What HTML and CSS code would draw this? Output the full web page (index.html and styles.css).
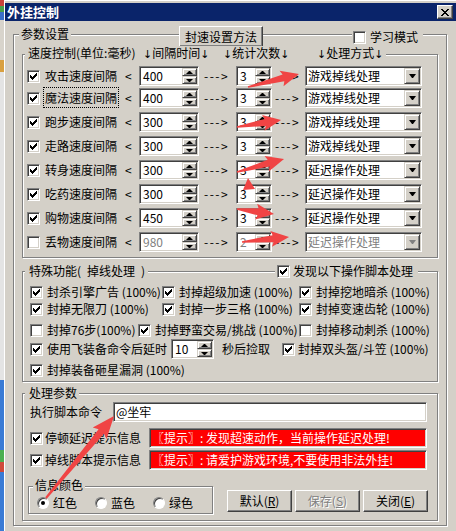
FILE: index.html
```html
<!DOCTYPE html>
<html lang="zh-CN">
<head>
<meta charset="utf-8">
<title>外挂控制</title>
<link rel="stylesheet" href="styles.css">
</head>
<body>
<div class="desk"></div>
<div class="win">
  <div class="titlebar">
    <span class="title">外挂控制</span>
    <span class="close"><svg width="8" height="7" viewBox="0 0 8 7" shape-rendering="crispEdges"><path d="M0 0h2v1H0zM6 0h2v1H6zM1 1h2v1H1zM5 1h2v1H5zM2 2h4v1H2zM3 3h2v1H3zM2 4h4v1H2zM1 5h2v1H1zM5 5h2v1H5zM0 6h2v1H0zM6 6h2v1H6z"/></svg></span>
  </div>

  <div class="group outer">
    <div class="ghead outerhead">
      <span class="cap">参数设置</span>
      <button class="btn method">封速设置方法</button>
      <label class="hcheck learn"><span class="cb"></span><span>学习模式</span></label>
    </div>

    <div class="group inner speed">
      <div class="ghead">
        <span class="cap speedcap"><span class="h1">速度控制(单位:毫秒)</span><span class="h2"><i>↓</i>间隔时间<i>↓</i></span><span class="h3"><i>↓</i>统计次数<i>↓</i></span><span class="h4"><i>↓</i>处理方式<i>↓</i></span></span>
      </div>

      <div class="srow first">
        <span class="cb"><svg viewBox="0 0 11 11" width="11" height="11" shape-rendering="crispEdges"><path d="M8 2h1v1H8zM7 3h2v1H7zM2 4h1v1H2zM6 4h3v1H6zM2 5h2v1H2zM5 5h3v1H5zM2 6h5v1H2zM3 7h3v1H3zM4 8h1v1H4z"/></svg></span>
        <span class="slabel">攻击速度间隔</span><span class="lt">&lt;</span>
        <span class="spin w60"><span class="val">400</span><span class="ud"><span class="up"></span><span class="dn"></span></span></span>
        <span class="dash">---&gt;</span>
        <span class="spin w36"><span class="val">3</span><span class="ud"><span class="up"></span><span class="dn"></span></span></span>
        <span class="dash2">---&gt;</span>
        <span class="combo"><span class="val">游戏掉线处理</span><span class="drop"></span></span>
      </div>
      <div class="srow">
        <span class="cb"><svg viewBox="0 0 11 11" width="11" height="11" shape-rendering="crispEdges"><path d="M8 2h1v1H8zM7 3h2v1H7zM2 4h1v1H2zM6 4h3v1H6zM2 5h2v1H2zM5 5h3v1H5zM2 6h5v1H2zM3 7h3v1H3zM4 8h1v1H4z"/></svg></span>
        <span class="slabel"><span class="focus">魔法速度间隔</span></span><span class="lt">&lt;</span>
        <span class="spin w60"><span class="val">400</span><span class="ud"><span class="up"></span><span class="dn"></span></span></span>
        <span class="dash">---&gt;</span>
        <span class="spin w36"><span class="val">3</span><span class="ud"><span class="up"></span><span class="dn"></span></span></span>
        <span class="dash2">---&gt;</span>
        <span class="combo"><span class="val">游戏掉线处理</span><span class="drop"></span></span>
      </div>
      <div class="srow">
        <span class="cb"><svg viewBox="0 0 11 11" width="11" height="11" shape-rendering="crispEdges"><path d="M8 2h1v1H8zM7 3h2v1H7zM2 4h1v1H2zM6 4h3v1H6zM2 5h2v1H2zM5 5h3v1H5zM2 6h5v1H2zM3 7h3v1H3zM4 8h1v1H4z"/></svg></span>
        <span class="slabel">跑步速度间隔</span><span class="lt">&lt;</span>
        <span class="spin w60"><span class="val">300</span><span class="ud"><span class="up"></span><span class="dn"></span></span></span>
        <span class="dash">---&gt;</span>
        <span class="spin w36"><span class="val">3</span><span class="ud"><span class="up"></span><span class="dn"></span></span></span>
        <span class="dash2">---&gt;</span>
        <span class="combo"><span class="val">游戏掉线处理</span><span class="drop"></span></span>
      </div>
      <div class="srow">
        <span class="cb"><svg viewBox="0 0 11 11" width="11" height="11" shape-rendering="crispEdges"><path d="M8 2h1v1H8zM7 3h2v1H7zM2 4h1v1H2zM6 4h3v1H6zM2 5h2v1H2zM5 5h3v1H5zM2 6h5v1H2zM3 7h3v1H3zM4 8h1v1H4z"/></svg></span>
        <span class="slabel">走路速度间隔</span><span class="lt">&lt;</span>
        <span class="spin w60"><span class="val">300</span><span class="ud"><span class="up"></span><span class="dn"></span></span></span>
        <span class="dash">---&gt;</span>
        <span class="spin w36"><span class="val">3</span><span class="ud"><span class="up"></span><span class="dn"></span></span></span>
        <span class="dash2">---&gt;</span>
        <span class="combo"><span class="val">游戏掉线处理</span><span class="drop"></span></span>
      </div>
      <div class="srow">
        <span class="cb"><svg viewBox="0 0 11 11" width="11" height="11" shape-rendering="crispEdges"><path d="M8 2h1v1H8zM7 3h2v1H7zM2 4h1v1H2zM6 4h3v1H6zM2 5h2v1H2zM5 5h3v1H5zM2 6h5v1H2zM3 7h3v1H3zM4 8h1v1H4z"/></svg></span>
        <span class="slabel">转身速度间隔</span><span class="lt">&lt;</span>
        <span class="spin w60"><span class="val">300</span><span class="ud"><span class="up"></span><span class="dn"></span></span></span>
        <span class="dash">---&gt;</span>
        <span class="spin w36"><span class="val">3</span><span class="ud"><span class="up"></span><span class="dn"></span></span></span>
        <span class="dash2">---&gt;</span>
        <span class="combo"><span class="val">延迟操作处理</span><span class="drop"></span></span>
      </div>
      <div class="srow">
        <span class="cb"><svg viewBox="0 0 11 11" width="11" height="11" shape-rendering="crispEdges"><path d="M8 2h1v1H8zM7 3h2v1H7zM2 4h1v1H2zM6 4h3v1H6zM2 5h2v1H2zM5 5h3v1H5zM2 6h5v1H2zM3 7h3v1H3zM4 8h1v1H4z"/></svg></span>
        <span class="slabel">吃药速度间隔</span><span class="lt">&lt;</span>
        <span class="spin w60"><span class="val">300</span><span class="ud"><span class="up"></span><span class="dn"></span></span></span>
        <span class="dash">---&gt;</span>
        <span class="spin w36"><span class="val">3</span><span class="ud"><span class="up"></span><span class="dn"></span></span></span>
        <span class="dash2">---&gt;</span>
        <span class="combo"><span class="val">延迟操作处理</span><span class="drop"></span></span>
      </div>
      <div class="srow">
        <span class="cb"><svg viewBox="0 0 11 11" width="11" height="11" shape-rendering="crispEdges"><path d="M8 2h1v1H8zM7 3h2v1H7zM2 4h1v1H2zM6 4h3v1H6zM2 5h2v1H2zM5 5h3v1H5zM2 6h5v1H2zM3 7h3v1H3zM4 8h1v1H4z"/></svg></span>
        <span class="slabel">购物速度间隔</span><span class="lt">&lt;</span>
        <span class="spin w60"><span class="val">450</span><span class="ud"><span class="up"></span><span class="dn"></span></span></span>
        <span class="dash">---&gt;</span>
        <span class="spin w36"><span class="val">3</span><span class="ud"><span class="up"></span><span class="dn"></span></span></span>
        <span class="dash2">---&gt;</span>
        <span class="combo"><span class="val">延迟操作处理</span><span class="drop"></span></span>
      </div>
      <div class="srow">
        <span class="cb"></span>
        <span class="slabel">丢物速度间隔</span><span class="lt">&lt;</span>
        <span class="spin w60 off"><span class="val">980</span><span class="ud"><span class="up"></span><span class="dn"></span></span></span>
        <span class="dash">---&gt;</span>
        <span class="spin w36 off"><span class="val">2</span><span class="ud"><span class="up"></span><span class="dn"></span></span></span>
        <span class="dash2">---&gt;</span>
        <span class="combo off"><span class="val">延迟操作处理</span><span class="drop"></span></span>
      </div>
    </div>

    <div class="group inner special">
      <div class="ghead spechead">
        <span class="cap">特殊功能(&ensp;掉线处理&ensp;)</span>
        <label class="hcheck found"><span class="cb"><svg viewBox="0 0 11 11" width="11" height="11" shape-rendering="crispEdges"><path d="M8 2h1v1H8zM7 3h2v1H7zM2 4h1v1H2zM6 4h3v1H6zM2 5h2v1H2zM5 5h3v1H5zM2 6h5v1H2zM3 7h3v1H3zM4 8h1v1H4z"/></svg></span><span>发现以下操作脚本处理</span></label>
      </div>
      <div class="xrow r1">
        <span class="xi c1"><span class="cb"><svg viewBox="0 0 11 11" width="11" height="11" shape-rendering="crispEdges"><path d="M8 2h1v1H8zM7 3h2v1H7zM2 4h1v1H2zM6 4h3v1H6zM2 5h2v1H2zM5 5h3v1H5zM2 6h5v1H2zM3 7h3v1H3zM4 8h1v1H4z"/></svg></span><span>封杀引擎广告 (100%)</span></span>
        <span class="xi c2"><span class="cb"><svg viewBox="0 0 11 11" width="11" height="11" shape-rendering="crispEdges"><path d="M8 2h1v1H8zM7 3h2v1H7zM2 4h1v1H2zM6 4h3v1H6zM2 5h2v1H2zM5 5h3v1H5zM2 6h5v1H2zM3 7h3v1H3zM4 8h1v1H4z"/></svg></span><span>封掉超级加速 (100%)</span></span>
        <span class="xi"><span class="cb"><svg viewBox="0 0 11 11" width="11" height="11" shape-rendering="crispEdges"><path d="M8 2h1v1H8zM7 3h2v1H7zM2 4h1v1H2zM6 4h3v1H6zM2 5h2v1H2zM5 5h3v1H5zM2 6h5v1H2zM3 7h3v1H3zM4 8h1v1H4z"/></svg></span><span>封掉挖地暗杀 (100%)</span></span>
      </div>
      <div class="xrow r2">
        <span class="xi c1"><span class="cb"><svg viewBox="0 0 11 11" width="11" height="11" shape-rendering="crispEdges"><path d="M8 2h1v1H8zM7 3h2v1H7zM2 4h1v1H2zM6 4h3v1H6zM2 5h2v1H2zM5 5h3v1H5zM2 6h5v1H2zM3 7h3v1H3zM4 8h1v1H4z"/></svg></span><span>封掉无限刀 (100%)</span></span>
        <span class="xi c2"><span class="cb"><svg viewBox="0 0 11 11" width="11" height="11" shape-rendering="crispEdges"><path d="M8 2h1v1H8zM7 3h2v1H7zM2 4h1v1H2zM6 4h3v1H6zM2 5h2v1H2zM5 5h3v1H5zM2 6h5v1H2zM3 7h3v1H3zM4 8h1v1H4z"/></svg></span><span>封掉一步三格 (100%)</span></span>
        <span class="xi"><span class="cb"><svg viewBox="0 0 11 11" width="11" height="11" shape-rendering="crispEdges"><path d="M8 2h1v1H8zM7 3h2v1H7zM2 4h1v1H2zM6 4h3v1H6zM2 5h2v1H2zM5 5h3v1H5zM2 6h5v1H2zM3 7h3v1H3zM4 8h1v1H4z"/></svg></span><span>封掉变速齿轮 (100%)</span></span>
      </div>
      <div class="xrow r3">
        <span class="xi c1b"><span class="cb"></span><span>封掉76步(100%)</span></span>
        <span class="xi c2b"><span class="cb"><svg viewBox="0 0 11 11" width="11" height="11" shape-rendering="crispEdges"><path d="M8 2h1v1H8zM7 3h2v1H7zM2 4h1v1H2zM6 4h3v1H6zM2 5h2v1H2zM5 5h3v1H5zM2 6h5v1H2zM3 7h3v1H3zM4 8h1v1H4z"/></svg></span><span>封掉野蛮交易/挑战 (100%)</span></span>
        <span class="xi"><span class="cb"></span><span>封掉移动刺杀 (100%)</span></span>
      </div>
      <div class="xrow r4">
        <span class="xi delay"><span class="cb"><svg viewBox="0 0 11 11" width="11" height="11" shape-rendering="crispEdges"><path d="M8 2h1v1H8zM7 3h2v1H7zM2 4h1v1H2zM6 4h3v1H6zM2 5h2v1H2zM5 5h3v1H5zM2 6h5v1H2zM3 7h3v1H3zM4 8h1v1H4z"/></svg></span><span>使用飞装备命令后延时</span></span>
        <span class="spin w43"><span class="val">10</span><span class="ud"><span class="up"></span><span class="dn"></span></span></span>
        <span class="after">秒后捡取</span>
        <span class="xi tight"><span class="cb"><svg viewBox="0 0 11 11" width="11" height="11" shape-rendering="crispEdges"><path d="M8 2h1v1H8zM7 3h2v1H7zM2 4h1v1H2zM6 4h3v1H6zM2 5h2v1H2zM5 5h3v1H5zM2 6h5v1H2zM3 7h3v1H3zM4 8h1v1H4z"/></svg></span><span>封掉双头盔/斗笠 (100%)</span></span>
      </div>
      <div class="xrow r5">
        <span class="xi"><span class="cb"><svg viewBox="0 0 11 11" width="11" height="11" shape-rendering="crispEdges"><path d="M8 2h1v1H8zM7 3h2v1H7zM2 4h1v1H2zM6 4h3v1H6zM2 5h2v1H2zM5 5h3v1H5zM2 6h5v1H2zM3 7h3v1H3zM4 8h1v1H4z"/></svg></span><span>封掉装备砸星漏洞 (100%)</span></span>
      </div>
    </div>

    <div class="group inner proc">
      <div class="ghead plainhead">
        <span class="cap">处理参数</span>
      </div>
      <div class="erow">
        <span class="elabel">执行脚本命令</span>
        <span class="edit">@坐牢</span>
      </div>
      <div class="trow t1">
        <span class="tlabel"><span class="cb"><svg viewBox="0 0 11 11" width="11" height="11" shape-rendering="crispEdges"><path d="M8 2h1v1H8zM7 3h2v1H7zM2 4h1v1H2zM6 4h3v1H6zM2 5h2v1H2zM5 5h3v1H5zM2 6h5v1H2zM3 7h3v1H3zM4 8h1v1H4z"/></svg></span><span>停顿延迟提示信息</span></span>
        <span class="red">〖提示〗: 发现超速动作，当前操作延迟处理!</span>
      </div>
      <div class="trow t2">
        <span class="tlabel"><span class="cb"><svg viewBox="0 0 11 11" width="11" height="11" shape-rendering="crispEdges"><path d="M8 2h1v1H8zM7 3h2v1H7zM2 4h1v1H2zM6 4h3v1H6zM2 5h2v1H2zM5 5h3v1H5zM2 6h5v1H2zM3 7h3v1H3zM4 8h1v1H4z"/></svg></span><span>掉线脚本提示信息</span></span>
        <span class="red">〖提示〗: 请爱护游戏环境,不要使用非法外挂!</span>
      </div>
      <div class="brow">
        <div class="group colors">
          <div class="ghead colorhead">
            <span class="cap">信息颜色</span>
          </div>
          <div class="rrow">
            <span class="ri"><span class="rd on"></span><span>红色</span></span>
            <span class="ri"><span class="rd"></span><span>蓝色</span></span>
            <span class="ri"><span class="rd"></span><span>绿色</span></span>
          </div>
        </div>
        <div class="btns">
          <button class="btn b">默认(<u>R</u>)</button>
          <button class="btn b dis">保存(<u>S</u>)</button>
          <button class="btn b">关闭(<u>E</u>)</button>
        </div>
      </div>
    </div>
  </div>
</div>

<svg class="annot" width="456" height="531" viewBox="0 0 456 531">
  <g fill="#f04444">
    <g transform="translate(248 87) rotate(-14.3)"><polygon points="0,-0.8 36.6,-3.5 34.6,-8 52.6,0 34.6,8 36.6,3.5 0,0.8"/></g>
    <g transform="translate(237 127) rotate(-9)"><polygon points="0,-0.8 28.6,-3.5 26.6,-8 44.6,0 26.6,8 28.6,3.5 0,0.8"/></g>
    <g transform="translate(237 172) rotate(-15.5)"><polygon points="0,-0.8 32.8,-3.5 30.8,-8 48.8,0 30.8,8 32.8,3.5 0,0.8"/></g>
    <polygon points="248,178 243,190 255,189"/>
    <g transform="translate(237 209) rotate(7.7)"><polygon points="0,-0.8 21.3,-3.5 19.3,-8 37.3,0 19.3,8 21.3,3.5 0,0.8"/></g>
    <g transform="translate(242 242) rotate(-6.1)"><polygon points="0,-0.8 31.3,-3.5 29.3,-8 47.3,0 29.3,8 31.3,3.5 0,0.8"/></g>
    <g transform="translate(46 498) rotate(-50.3)"><polygon points="0,-1 86.5,-3.5 84,-9 106.5,0 84,9 86.5,3.5 0,1"/></g>
  </g>
</svg>
</body>
</html>
```

FILE: styles.css
```css
* { box-sizing: border-box; }
html, body { margin: 0; padding: 0; }
body {
  width: 456px;
  height: 531px;
  overflow: hidden;
  display: flex;
  position: relative;
  background: #d4d0c8;
  color: #000;
  font-family: "Noto Sans CJK SC", "Liberation Sans", sans-serif;
  font-size: 12px;
  line-height: 14px;
}

.desk {
  width: 4px;
  flex: none;
  background: linear-gradient(to bottom,
    #c8413a 0 6px, #4aa04a 6px 12px, #3a6fc9 12px 20px,
    #d8d4cc 20px 60px, #d9a040 60px 72px, #e4e4e4 72px 380px,
    #3a7bd5 380px 450px, #4caf50 450px 462px, #d04a3a 462px 472px,
    #3a7bd5 472px 531px);
}

.win {
  width: 452px;
  height: 531px;
  flex: none;
  background: #d4d0c8;
  border-left: 1px solid #fff;
  padding-top: 3px;
  box-shadow: inset 0 1px #fff;
}

.titlebar {
  height: 18px;
  background: #0a246a;
  color: #fff;
  display: flex;
  align-items: center;
  padding: 0 3px 0 2px;
}
.title { font-weight: bold; font-size: 13px; }
.close {
  margin-left: auto;
  width: 16px;
  height: 14px;
  background: #d4d0c8;
  border: 1px solid;
  border-color: #fff #404040 #404040 #fff;
  box-shadow: inset -1px -1px #808080;
  display: flex;
  align-items: center;
  justify-content: center;
}
.close svg { display: block; }

/* group boxes (etched frame) */
.group {
  border: 1px solid #808080;
  box-shadow: inset 1px 1px #fff, 1px 1px #fff;
}
.ghead {
  display: flex;
  align-items: center;
  height: 14px;
  margin-top: -8px;
}
.cap {
  background: #d4d0c8;
  padding: 0 2px;
  line-height: 14px;
  white-space: nowrap;
}

.outer {
  margin: 13px 0 0 8px;
  width: 434px;
  padding-bottom: 4px;
}
.outerhead { padding-left: 5px; padding-right: 23px; }
.inner { margin-left: 8px; width: 416px; }

.btn {
  font: inherit;
  color: #000;
  padding: 0;
  background: #d4d0c8;
  border: 1px solid;
  border-color: #fff #404040 #404040 #fff;
  box-shadow: inset -1px -1px #808080;
  display: flex;
  align-items: center;
  justify-content: center;
  white-space: nowrap;
}
.method {
  width: 84px;
  height: 21px;
  align-self: flex-start;
  margin-top: -1px;
  margin-left: 108px;
}

.hcheck {
  display: flex;
  align-items: center;
  gap: 4px;
  background: #d4d0c8;
  padding: 0 5px 0 1px;
  height: 14px;
  white-space: nowrap;
}
.learn { align-self: flex-start; margin-top: 3px; margin-left: auto; }

.cb {
  display: block;
  flex: none;
  width: 13px;
  height: 13px;
  background: #fff;
  border: 1px solid;
  border-color: #808080 #fff #fff #808080;
  box-shadow: inset 1px 1px #404040, inset -1px -1px #d4d0c8;
}
.cb svg { display: block; }

/* speed group */
.speed { margin-top: 13px; padding-bottom: 3px; }
.speed .ghead { padding-left: 2px; }
.speedcap { display: flex; padding: 0 3px; }
.speedcap i { font-style: normal; font-family: "DejaVu Sans", sans-serif; font-size: 11px; }
.h1 { width: 115px; }
.h2 { width: 80px; }
.h3 { width: 94px; }
.h4 { width: 66px; }

.srow {
  display: flex;
  align-items: center;
  height: 24px;
  padding-left: 4px;
  white-space: nowrap;
}
.srow.first { height: 20px; margin-top: 5px; }
.slabel { width: 80px; margin-left: 5px; flex: none; }
.focus { outline: 1px dotted #000; outline-offset: 1px; }
.lt { width: 14px; flex: none; }
.dash { width: 37px; padding-left: 5px; flex: none; letter-spacing: 1.5px; }
.dash2 { width: 33px; padding-left: 3px; flex: none; letter-spacing: 1.5px; }

.spin, .combo, .edit, .red {
  border: 1px solid;
  border-color: #808080 #fff #fff #808080;
  box-shadow: inset 1px 1px #404040, inset -1px -1px #d4d0c8;
  padding: 1px;
  background: #fff;
}
.spin {
  display: flex;
  flex: none;
  height: 20px;
}
.w60 { width: 60px; }
.w36 { width: 36px; }
.w43 { width: 43px; }
.spin .val, .combo .val { flex: 1; padding-left: 2px; line-height: 16px; }
.off .val { color: #808080; }

.ud { width: 15px; display: flex; flex-direction: column; flex: none; }
.ud span, .drop {
  background: #d4d0c8;
  border: 1px solid;
  border-color: #d4d0c8 #404040 #404040 #d4d0c8;
  box-shadow: inset 1px 1px #fff, inset -1px -1px #808080;
  display: flex;
  align-items: center;
  justify-content: center;
}
.ud span { flex: 1; }
.up::after {
  content: "";
  width: 1px;
  border-left: 3px solid transparent;
  border-right: 3px solid transparent;
  border-bottom: 3px solid #000;
}
.dn::after, .drop::after {
  content: "";
  width: 1px;
  border-left: 3px solid transparent;
  border-right: 3px solid transparent;
  border-top: 3px solid #000;
}
.drop::after { border-top-width: 4px; }
.off .drop::after { border-top-color: #808080; }

.combo { display: flex; flex: none; width: 117px; height: 20px; }
.combo .val { padding-left: 1px; }
.drop { width: 16px; flex: none; }

/* special group */
.special { margin-top: 13px; padding-bottom: 2px; }
.spechead { padding-left: 2px; padding-right: 19px; }
.spechead .cap { padding: 0 3px 0 4px; }
.found { margin-left: auto; padding-left: 2px; gap: 3px; }

.xrow {
  display: flex;
  align-items: center;
  height: 18px;
  padding-left: 7px;
  white-space: nowrap;
}
.r1 { margin-top: 5px; }
.r2 { margin-top: -1px; }
.r3 { margin-top: 3px; }
.r4 { height: 20px; }
.r5 { margin-top: 2px; }
.xi { display: flex; align-items: center; gap: 4px; flex: none; }
.xi.tight { gap: 3px; }
.c1 { width: 132px; }
.c2 { width: 137px; }
.c1b { width: 108px; }
.c2b { width: 161px; }
.delay { width: 141px; }
.after { width: 60px; margin-left: 8px; flex: none; }

/* process group */
.proc { margin-top: 11px; padding-bottom: 6px; }
.plainhead { padding-left: 2px; }
.plainhead .cap { padding: 0 2px 0 4px; }

.erow {
  display: flex;
  align-items: center;
  height: 20px;
  margin-top: 2px;
  padding-left: 7px;
}
.elabel { width: 83px; flex: none; }
.edit { width: 314px; height: 20px; padding: 1px 2px; line-height: 16px; }

.trow {
  display: flex;
  align-items: center;
  height: 20px;
  padding-left: 7px;
  white-space: nowrap;
}
.t1 { margin-top: 6px; }
.t2 { margin-top: 2px; }
.tlabel { display: flex; align-items: center; gap: 2px; width: 119px; flex: none; }
.red {
  width: 278px;
  height: 20px;
  background: #f00;
  color: #fff;
  padding: 1px 2px;
  line-height: 16px;
}

.brow {
  display: flex;
  align-items: flex-start;
  margin-top: 16px;
  padding-left: 5px;
}
.colors { width: 185px; padding-bottom: 1px; }
.colorhead { padding-left: 4px; height: 12px; margin-top: -8px; }
.colorhead .cap { line-height: 12px; }
.rrow {
  display: flex;
  align-items: center;
  height: 18px;
  margin-top: 3px;
  padding-left: 8px;
}
.ri { display: flex; align-items: center; gap: 4px; width: 58px; flex: none; }
.rd {
  width: 12px;
  height: 12px;
  flex: none;
  border-radius: 50%;
  background: #fff;
  border: 1px solid;
  border-color: #808080 #fff #fff #808080;
  box-shadow: inset 1px 1px #404040;
  display: flex;
  align-items: center;
  justify-content: center;
}
.rd.on::after {
  content: "";
  width: 4px;
  height: 4px;
  border-radius: 50%;
  background: #000;
}

.btns { display: flex; gap: 3px; margin-left: 14px; margin-top: 4px; }
.btn.b { width: 65px; height: 22px; }
.btn u { text-decoration: underline; }
.dis { color: #808080; text-shadow: 1px 1px #fff; }

.annot { position: absolute; left: 0; top: 0; pointer-events: none; }
```
